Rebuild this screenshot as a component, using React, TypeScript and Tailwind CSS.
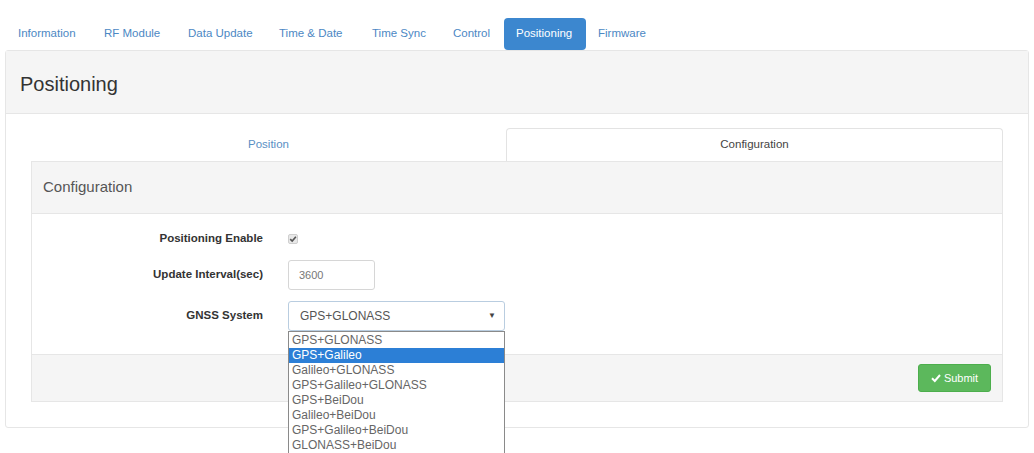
import React from "react";

const navItems = [
  { label: "Information", w: "w-[86px]" },
  { label: "RF Module", w: "w-[84px]" },
  { label: "Data Update", w: "w-[91px]" },
  { label: "Time & Date", w: "w-[93px]" },
  { label: "Time Sync", w: "w-[81px]" },
  { label: "Control", w: "w-[63px]" },
  { label: "Positioning", w: "w-[82px]" },
  { label: "Firmware", w: "w-[72px]" },
];

const gnssOptions = [
  "GPS+GLONASS",
  "GPS+Galileo",
  "Galileo+GLONASS",
  "GPS+Galileo+GLONASS",
  "GPS+BeiDou",
  "Galileo+BeiDou",
  "GPS+Galileo+BeiDou",
  "GLONASS+BeiDou",
];

const App = () => {
  return (
    <div className="w-[1034px] h-[453px] overflow-hidden bg-white font-['Liberation_Sans',Arial,sans-serif] text-[#333]">
      {/* Top nav pills */}
      <nav className="flex items-center pl-[6px] pt-[17px] h-[50px]">
        {navItems.map((item) => (
          <a
            key={item.label}
            className={
              item.label === "Positioning"
                ? `${item.w} h-[32px] flex items-center px-3 rounded-[4px] bg-[#3c87cf] text-white text-[11.5px]`
                : `${item.w} h-[32px] flex items-center px-3 text-[#4c88c4] text-[11.5px] whitespace-nowrap`
            }
          >
            {item.label}
          </a>
        ))}
      </nav>

      {/* Outer panel */}
      <div className="ml-[5px] w-[1024px] border border-[#e6e6e6] rounded-[3px]">
        <div className="h-[63px] bg-[#f5f5f5] border-b border-[#e6e6e6] flex items-center pl-[14px] pt-[4px]">
          <h1 className="text-[20px] text-[#333]">Positioning</h1>
        </div>

        <div className="px-[25px] pt-[14px] pb-[25px]">
          {/* Sub tabs */}
          <div className="flex h-[33px] text-[11.5px]">
            <div className="w-[475px] flex items-center justify-center text-[#5a8fc4]">
              Position
            </div>
            <div className="flex-1 flex items-center justify-center text-[#444] border border-b-0 border-[#e3e3e3] rounded-t-[4px] bg-white">
              Configuration
            </div>
          </div>

          {/* Inner panel */}
          <div className="border border-[#e6e6e6]">
            <div className="h-[52px] bg-[#f5f5f5] border-b border-[#e6e6e6] flex items-center pl-[11px] text-[15px] text-[#555]">
              Configuration
            </div>

            <div className="h-[140px] pt-[15px] flex flex-col gap-[11px]">
              <div className="flex items-center h-[20px]">
                <div className="w-[231px] text-right font-bold text-[11.5px] text-[#333]">
                  Positioning Enable
                </div>
                <div className="ml-[25px] w-[10px] h-[10px] rounded-[2px] bg-[#e8e8e8] border border-[#cfcfcf] flex items-center justify-center">
                  <svg width="8" height="8" viewBox="0 0 10 10">
                    <path d="M1.5 5.2 L4 7.6 L8.6 2.2" fill="none" stroke="#555" strokeWidth="2" />
                  </svg>
                </div>
              </div>

              <div className="flex items-center h-[30px]">
                <div className="w-[231px] text-right font-bold text-[11.5px] text-[#333]">
                  Update Interval(sec)
                </div>
                <div className="ml-[25px] w-[87px] h-[30px] border border-[#d6d6d6] rounded-[3px] flex items-center pl-[10px] text-[11px] text-[#777]">
                  3600
                </div>
              </div>

              <div className="flex items-center h-[30px]">
                <div className="w-[231px] text-right font-bold text-[11.5px] text-[#333]">
                  GNSS System
                </div>
                <div className="relative ml-[25px] w-[217px] h-[30px]">
                  <div className="w-full h-full border border-[#b9cde0] rounded-[3px] flex items-center justify-between pl-[11px] pr-[8px] text-[12px] text-[#555]">
                    <span>GPS+GLONASS</span>
                    <span className="text-[8px] text-[#444]">▼</span>
                  </div>
                  {/* Open dropdown list */}
                  <div className="absolute left-0 top-[30px] w-[217px] bg-white border border-[#8a8a8a] z-10 pt-[1px] text-[12px] text-[#666]">
                    {gnssOptions.map((opt) => (
                      <div
                        key={opt}
                        className={
                          opt === "GPS+Galileo"
                            ? "h-[15px] leading-[15px] pl-[3px] bg-[#2c7fd6] text-white"
                            : "h-[15px] leading-[15px] pl-[3px]"
                        }
                      >
                        {opt}
                      </div>
                    ))}
                  </div>
                </div>
              </div>
            </div>

            <div className="h-[47px] bg-[#f5f5f5] border-t border-[#e6e6e6] flex items-center justify-end pr-[11px]">
              <button className="w-[73px] h-[28px] rounded-[3px] bg-[#5cb85c] border border-[#4cae4c] text-white text-[11px] flex items-center justify-center gap-[3px]">
                <svg width="10" height="10" viewBox="0 0 10 10">
                  <path d="M1 5.3 L3.8 8 L9 2" fill="none" stroke="white" strokeWidth="2" />
                </svg>
                Submit
              </button>
            </div>
          </div>
        </div>
      </div>
    </div>
  );
};

export default App;
